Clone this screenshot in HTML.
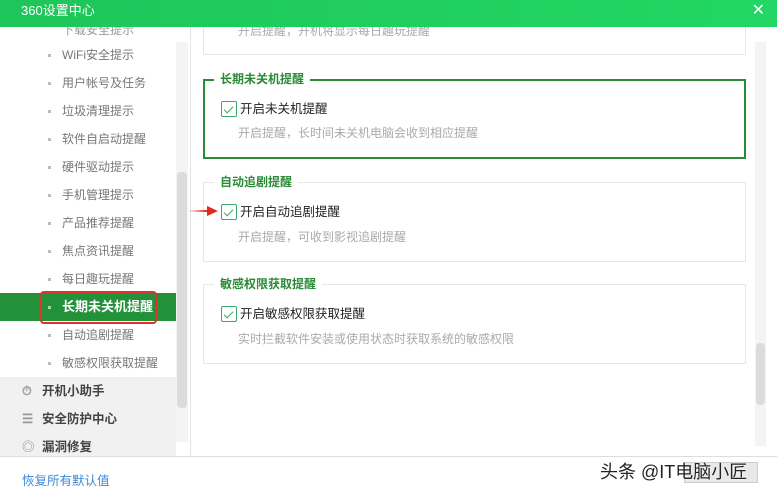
<!DOCTYPE html>
<html><head><meta charset="utf-8"><style>
*{margin:0;padding:0;box-sizing:border-box}
body{width:777px;height:495px;overflow:hidden;background:#fff;font-family:"Liberation Sans","Noto Sans CJK SC",sans-serif;font-size:12px;position:relative;color:#333}
.a{position:absolute;white-space:nowrap}
.title{left:0;top:0;width:777px;height:27px;background:linear-gradient(90deg,#1ec55a,#22d764);color:#fff;font-size:13px;line-height:22px;padding-left:21px;z-index:5}
.item{left:0;width:176px;height:28px;line-height:28px;color:#777;font-size:12px}
.item b{position:absolute;left:48px;top:13px;width:3px;height:3px;background:#bbb}
.item span{position:absolute;left:62px}
.grp{left:0;width:176px;height:28px;line-height:28px;background:#f1f1f1;color:#444;font-weight:bold;font-size:12.5px}
.grp span{position:absolute;left:42px}
.box{border:1px solid #e6e6e6;left:203px;width:543px;height:80px}
.leg{background:#fff;padding:0 6px;color:#2b8a36;font-weight:bold;font-size:12px;line-height:14px}
.cb{width:16px;height:16px;border:1px solid #3aa86a;border-radius:2px;background:#fff}
.cb:after{content:"";position:absolute;left:4px;top:2px;width:4px;height:8px;border:solid #3aa86a;border-width:0 1.5px 1.5px 0;transform:rotate(45deg)}
.lbl{color:#222;font-size:12.5px;line-height:16px}
.desc{color:#aaa;font-size:12px;line-height:14px}
</style></head><body>
<div class="a title">360设置中心<span style="position:absolute;right:12px;top:0;font-size:16px">✕</span></div>
<div class="a" style="left:62px;top:21px;color:#999;font-size:12px">下载安全提示</div>
<div class="a" style="left:190px;top:27px;width:1px;height:429px;background:#e3e3e3"></div>
<div class="a" style="left:176px;top:42px;width:12px;height:400px;background:#f4f4f4"></div>
<div class="a" style="left:177px;top:172px;width:10px;height:236px;background:#dcdcdc;border-radius:4px"></div>

<div class="a item" style="top:41px"><b></b><span>WiFi安全提示</span></div>
<div class="a item" style="top:69px"><b></b><span>用户帐号及任务</span></div>
<div class="a item" style="top:97px"><b></b><span>垃圾清理提示</span></div>
<div class="a item" style="top:125px"><b></b><span>软件自启动提醒</span></div>
<div class="a item" style="top:153px"><b></b><span>硬件驱动提示</span></div>
<div class="a item" style="top:181px"><b></b><span>手机管理提示</span></div>
<div class="a item" style="top:209px"><b></b><span>产品推荐提醒</span></div>
<div class="a item" style="top:237px"><b></b><span>焦点资讯提醒</span></div>
<div class="a item" style="top:265px"><b></b><span>每日趣玩提醒</span></div>
<div class="a item" style="top:293px;background:#23903a;color:#fff;font-weight:bold;font-size:13px"><b style="background:#9fd6a8"></b><span>长期未关机提醒</span></div>
<div class="a" style="left:40px;top:291px;width:117px;height:33px;border:2.5px solid #e0312a;border-radius:4px"></div>
<div class="a item" style="top:321px"><b></b><span>自动追剧提醒</span></div>
<div class="a item" style="top:349px"><b></b><span>敏感权限获取提醒</span></div>
<div class="a grp" style="top:377px"><span style="left:22px;color:#999">⏱</span><span>开机小助手</span></div>
<div class="a grp" style="top:405px"><span style="left:22px;color:#999">☰</span><span>安全防护中心</span></div>
<div class="a grp" style="top:433px;height:23px;overflow:hidden"><span style="left:22px;color:#999">◎</span><span>漏洞修复</span></div>

<div class="a" style="left:0;top:456px;width:777px;height:1px;background:#ddd"></div>
<div class="a" style="left:22px;top:470px;color:#3a8ad8;font-size:12.5px">恢复所有默认值</div>

<div class="a box" style="top:20px;height:35px;border-top:none"></div>
<div class="a desc" style="left:238px;top:24px">开启提醒，开机将显示每日趣玩提醒</div>

<div class="a box" style="top:79px;height:80px;border:2px solid #2b8a36"></div>
<div class="a leg" style="left:214px;top:72px">长期未关机提醒</div>
<div class="a cb" style="left:221px;top:101px"></div>
<div class="a lbl" style="left:240px;top:101px">开启未关机提醒</div>
<div class="a desc" style="left:238px;top:126px">开启提醒，长时间未关机电脑会收到相应提醒</div>

<div class="a box" style="top:182px"></div>
<div class="a leg" style="left:214px;top:175px">自动追剧提醒</div>
<div class="a cb" style="left:221px;top:204px"></div>
<div class="a lbl" style="left:240px;top:204px">开启自动追剧提醒</div>
<div class="a desc" style="left:238px;top:230px">开启提醒，可收到影视追剧提醒</div>
<svg class="a" style="left:187px;top:205px" width="32" height="12"><path d="M1 6 L20 5 L20 1 L31 6 L20 11 L20 7 Z" fill="#e0281f"/></svg>

<div class="a box" style="top:284px"></div>
<div class="a leg" style="left:214px;top:277px">敏感权限获取提醒</div>
<div class="a cb" style="left:221px;top:306px"></div>
<div class="a lbl" style="left:240px;top:306px">开启敏感权限获取提醒</div>
<div class="a desc" style="left:238px;top:332px">实时拦截软件安装或使用状态时获取系统的敏感权限</div>

<div class="a" style="left:755px;top:42px;width:11px;height:404px;background:#f4f4f4"></div>
<div class="a" style="left:756px;top:343px;width:9px;height:62px;background:#dcdcdc;border-radius:4px"></div>

<div class="a" style="left:684px;top:462px;width:74px;height:21px;background:#e8e8e8;border:1px solid #ccc"></div>
<div class="a" style="left:600px;top:458px;font-size:18px;color:#222;text-shadow:0 0 2px #fff">头条 @IT电脑小匠</div>
</body></html>
